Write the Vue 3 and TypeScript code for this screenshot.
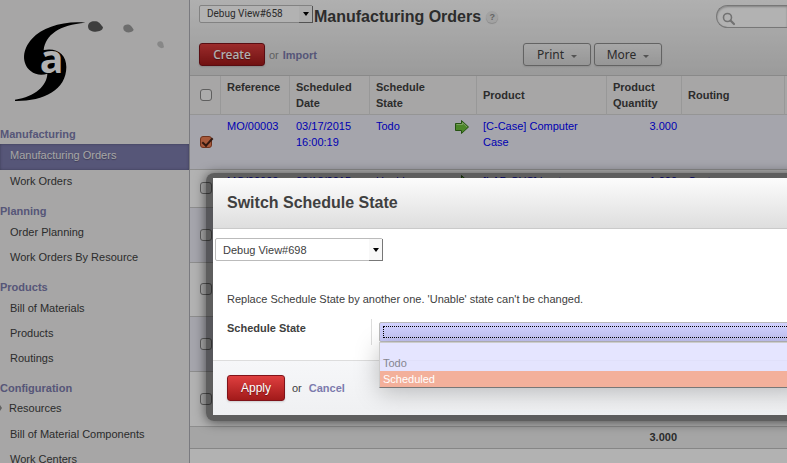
<script setup lang="ts">
import { ref } from 'vue'

interface MenuGroup {
  title: string
  items: string[]
}

interface OrderRow {
  reference: string
  date: string
  state: string
  product: string
  quantity: string
  routing: string
  height: number
}

const menu: MenuGroup[] = [
  { title: 'Manufacturing', items: ['Manufacturing Orders', 'Work Orders'] },
  { title: 'Planning', items: ['Order Planning', 'Work Orders By Resource'] },
  { title: 'Products', items: ['Bill of Materials', 'Products', 'Routings'] },
  { title: 'Configuration', items: ['Resources', 'Bill of Material Components', 'Work Centers'] },
]
const expandable = 'Resources'
const active = ref('Manufacturing Orders')

const blank = { reference: '', date: '', state: '', product: '', quantity: '', routing: '' }
const rows: OrderRow[] = [
  { reference: 'MO/00003', date: '03/17/2015 16:00:19', state: 'Todo', product: '[C-Case] Computer Case', quantity: '3.000', routing: '', height: 55 },
  { reference: 'MO/00002', date: '03/18/2015', state: 'Unable', product: '[LAP-CUS] Laptop', quantity: '1.000', routing: 'Custom', height: 38 },
  { ...blank, height: 55 },
  { ...blank, height: 54 },
  { ...blank, height: 55 },
  { ...blank, height: 55 },
]
const checked = ref<boolean[]>([true, false, false, false, false, false])

const states = ['', 'Todo', 'Scheduled']
const highlighted = ref('Scheduled')
</script>

<template>
  <div class="page">
    <aside class="sidebar">
      <svg class="logo" viewBox="0 0 540 354" aria-hidden="true">
        <path d="M256 68C190 62 128 82 96 116C66 148 64 190 92 213C106 225 126 227 142 221C141 256 106 290 45 299L45 303C130 304 199 270 199 201C199 164 172 142 131 150C136 105 178 74 256 68Z" fill="#000" />
        <path d="M264 78C265 66 276 62 288 64C299 66 303 75 309 82C308 92 296 96 283 95C270 94 264 88 264 78Z" fill="#5a5a5a" />
        <path d="M370 82C371 74 380 72 388 74C395 77 397 83 401 89C399 96 389 98 380 97C372 94 369 89 370 82Z" fill="#9c9c9c" />
        <path d="M472 130C473 124 480 122 486 125C491 129 490 135 492 141C488 147 481 144 476 140C472 137 471 134 472 130Z" fill="#c2c2c2" />
        <text x="119" y="219" class="logo-letter">a</text>
      </svg>
      <nav>
        <section v-for="group in menu" :key="group.title" class="group">
          <h2>{{ group.title }}</h2>
          <a
            v-for="item in group.items"
            :key="item"
            href="#"
            class="item"
            :class="{ active: item === active, parent: item === expandable }"
            @click.prevent="active = item"
          >{{ item }}</a>
        </section>
      </nav>
    </aside>

    <main class="content">
      <header class="toolbar">
        <div class="top-line">
          <div class="heading">
            <span class="picker small">
              <select aria-label="Debug view"><option>Debug View#658</option></select>
            </span>
            <h1>Manufacturing Orders</h1>
            <span class="help">?</span>
          </div>
          <label class="search">
            <svg viewBox="0 0 14 14" aria-hidden="true">
              <circle cx="5.5" cy="5.5" r="4" fill="none" stroke="#a4a4a4" stroke-width="1.6" />
              <path d="M8.5 8.5L12 12" stroke="#a4a4a4" stroke-width="2.2" stroke-linecap="round" />
            </svg>
            <input type="text" aria-label="Search" />
          </label>
        </div>
        <div class="actions">
          <div class="primary">
            <button type="button" class="red create">Create</button>
            <span class="or">or</span>
            <a href="#" class="link">Import</a>
          </div>
          <div class="menus">
            <button type="button" class="drop">Print</button>
            <button type="button" class="drop">More</button>
          </div>
        </div>
      </header>

      <table class="orders">
        <colgroup>
          <col class="c-check" /><col class="c-ref" /><col class="c-date" /><col class="c-state" />
          <col class="c-arrow" /><col class="c-product" /><col class="c-qty" /><col class="c-routing" /><col />
        </colgroup>
        <thead>
          <tr>
            <th class="check"><input type="checkbox" aria-label="Select all" /></th>
            <th class="top">Reference</th>
            <th>Scheduled Date</th>
            <th colspan="2">Schedule<br />State</th>
            <th>Product</th>
            <th>Product Quantity</th>
            <th>Routing</th>
            <th></th>
          </tr>
        </thead>
        <tbody>
          <tr v-for="(row, i) in rows" :key="i" :style="{ height: row.height + 'px' }">
            <td class="check"><input v-model="checked[i]" type="checkbox" aria-label="Select order" /></td>
            <td>{{ row.reference }}</td>
            <td>{{ row.date }}</td>
            <td>{{ row.state }}</td>
            <td class="arrow">
              <svg v-if="row.reference" viewBox="0 0 16 16" aria-hidden="true">
                <path d="M1.5 4.5H7.5V1.5L14.5 8L7.5 14.5V11.5H1.5Z" fill="#6cc13a" stroke="#35761a" stroke-linejoin="round" />
                <path d="M2.5 5.5H8.5V3.8L13 8" fill="none" stroke="#b4e48c" />
              </svg>
            </td>
            <td>{{ row.product }}</td>
            <td class="num">{{ row.quantity }}</td>
            <td>{{ row.routing }}</td>
            <td></td>
          </tr>
        </tbody>
        <tfoot>
          <tr>
            <td colspan="6"></td>
            <td class="num">3.000</td>
            <td colspan="2"></td>
          </tr>
        </tfoot>
      </table>
    </main>

    <div class="overlay"></div>

    <div class="dialog" role="dialog" aria-labelledby="dialog-title">
      <header class="dialog-head"><h2 id="dialog-title">Switch Schedule State</h2></header>
      <div class="dialog-body">
        <span class="picker large">
          <select aria-label="Debug view"><option>Debug View#698</option></select>
        </span>
        <p>Replace Schedule State by another one. 'Unable' state can't be changed.</p>
        <div class="field">
          <label for="state">Schedule State</label>
          <div class="control">
            <select id="state"><option v-for="s in states" :key="s">{{ s }}</option></select>
            <ul class="options" role="listbox">
              <li
                v-for="s in states"
                :key="s"
                role="option"
                :aria-selected="s === highlighted"
                :class="{ on: s === highlighted, empty: !s }"
                @mouseenter="highlighted = s"
              >{{ s }}</li>
            </ul>
          </div>
        </div>
      </div>
      <footer class="dialog-foot">
        <button type="button" class="red apply">Apply</button>
        <span>or</span>
        <a href="#" class="link">Cancel</a>
      </footer>
    </div>
  </div>
</template>

<style>
body {
  margin: 0;
}
</style>

<style scoped>
* {
  box-sizing: border-box;
}
.page {
  position: relative;
  display: flex;
  height: 100vh;
  overflow: hidden;
  background: #fff;
  color: #404040;
  font: 11px/16px "Liberation Sans", Arial, sans-serif;
}
h1,
h2,
p,
ul {
  margin: 0;
  padding: 0;
}
a {
  text-decoration: none;
}
button,
select,
input {
  margin: 0;
  font: inherit;
  color: inherit;
}

.sidebar {
  flex: 0 0 190px;
  overflow: hidden;
  border-right: 1px solid #afafb6;
  background: #efeeee;
}
.logo {
  display: block;
  width: 180px;
  height: 118px;
}
.logo-letter {
  fill: #fff;
  font: bold 118px "Open Sans", sans-serif;
}
.group h2 {
  height: 26px;
  padding-top: 7px;
  color: #7c7bad;
  font-size: 11px;
  line-height: 18px;
}
.item {
  display: block;
  height: 25px;
  padding-left: 10px;
  color: #404040;
  line-height: 22px;
}
.item.active {
  height: 26px;
  background: #7c7bad;
  color: #eee;
  box-shadow: inset 0 0 3px rgba(0, 0, 0, 0.3);
  text-shadow: 0 1px 1px rgba(0, 0, 0, 0.3);
}
.item.parent {
  display: flex;
  align-items: center;
  gap: 7px;
  padding: 0 0 5px;
}
.item.parent::before {
  content: "";
  border: solid transparent;
  border-width: 3px 0 3px 2px;
  border-left-color: #8c8c8c;
}

.content {
  flex: 1;
  min-width: 0;
}
.toolbar {
  height: 76px;
  padding: 5px 0 0 9px;
  border-bottom: 1px solid #c4c4c4;
  background: linear-gradient(#fcfcfc, #dedede);
}
.top-line {
  display: flex;
  justify-content: space-between;
  height: 38px;
}
.heading {
  display: flex;
  align-items: flex-start;
}
h1 {
  margin-left: 1px;
  font-size: 16px;
  line-height: 23px;
}
.help {
  width: 12px;
  height: 12px;
  margin: 6px 0 0 5px;
  border-radius: 50%;
  background: #e8e8e8;
  box-shadow: 0 1px 1px #c4c4c4;
  color: #909090;
  font-size: 9px;
  font-weight: bold;
  line-height: 12px;
  text-align: center;
}
.search {
  display: flex;
  align-items: center;
  width: 71px;
  height: 23px;
  padding-left: 5px;
  border: 1px solid #ababab;
  border-right: 0;
  border-radius: 12px 0 0 12px;
  background: #fff;
  box-shadow: inset 0 1px 2px #bbb;
}
.search svg {
  flex: none;
  width: 14px;
  height: 14px;
  margin-top: 4px;
}
.search input {
  width: 100%;
  min-width: 0;
  border: 0;
  outline: 0;
  background: none;
}
.picker {
  position: relative;
  display: block;
}
.picker select {
  display: block;
  width: 100%;
  height: 100%;
  padding: 0 7px;
  appearance: none;
  border: 1px solid #bbb;
  border-radius: 2px;
  background: #fff;
}
.picker::before {
  content: "";
  position: absolute;
  top: 1px;
  right: 0;
  bottom: 0;
  width: 13px;
  border: solid #777;
  border-width: 0 1px 1px 0;
  background: #f8f8f8;
}
.picker::after {
  content: "";
  position: absolute;
  top: 50%;
  right: 4px;
  margin-top: -2px;
  border: solid transparent;
  border-width: 4px 3px 0;
  border-top-color: #000;
}
.small {
  width: 114px;
  height: 18px;
  font: 10px/14px Roboto, sans-serif;
}
.large {
  width: 168px;
  height: 23px;
  margin-left: 2px;
}
.actions {
  display: grid;
  grid-template-columns: 324px 1fr;
}
.primary,
.menus {
  display: flex;
  align-items: center;
}
.menus {
  gap: 3px;
}
.red {
  padding: 0;
  border: 1px solid #80141a;
  border-radius: 3px;
  background: linear-gradient(#df3f3f, #a21a1a);
  color: #fff;
  text-shadow: 0 1px 1px rgba(0, 0, 0, 0.4);
  box-shadow: 0 1px 2px rgba(0, 0, 0, 0.15);
}
.create {
  width: 66px;
  height: 23px;
  font: 500 12px/20px "Noto Sans", sans-serif;
}
.or {
  margin: 0 4px;
  color: #8a8a8a;
}
.link {
  color: #7c7bad;
  font-weight: bold;
}
.drop {
  display: flex;
  align-items: center;
  justify-content: center;
  gap: 7px;
  width: 68px;
  height: 23px;
  padding: 0;
  border: 1px solid #8e8e8e;
  border-radius: 3px;
  background: linear-gradient(#efefef, #d8d8d8);
  font: 12px/20px "Noto Sans", sans-serif;
  box-shadow: 0 1px 2px rgba(0, 0, 0, 0.1);
}
.drop::after {
  content: "";
  margin-top: 3px;
  border: solid transparent;
  border-width: 3px 3px 0;
  border-top-color: #777;
}

.orders {
  width: 100%;
  table-layout: fixed;
  border-spacing: 0;
}
.c-check { width: 31px; }
.c-ref { width: 69px; }
.c-date { width: 80px; }
.c-state { width: 79px; }
.c-arrow { width: 28px; }
.c-product { width: 130px; }
.c-qty { width: 75px; }
.c-routing { width: 103px; }
th,
td {
  overflow: hidden;
  padding: 3px 5px 0 6px;
  text-align: left;
  vertical-align: top;
}
th {
  height: 39px;
  border-right: 1px solid #dadada;
  border-bottom: 1px solid #d6d6d6;
  background: #f0eeee;
  padding-top: 0;
  vertical-align: middle;
}
th.top {
  padding-top: 3px;
  vertical-align: top;
}
th:last-child {
  border-right: 0;
}
tbody td {
  border-bottom: 1px solid #cacaca;
  color: #00f;
}
tbody tr:nth-child(odd) td {
  background: #ededf7;
}
td.num {
  text-align: right;
}
tfoot td {
  height: 22px;
  padding-top: 2px;
  border-bottom: 1px solid #c0c0c0;
  background: #ececec;
  font-weight: bold;
}
.check,
tbody td.check {
  padding: 0 0 1px 10px;
  vertical-align: middle;
}
.check input {
  display: block;
  width: 12px;
  height: 12px;
  appearance: none;
  border: 1px solid #888;
  border-radius: 3px;
  background: #f6f6f6;
}
.check input:checked {
  border-color: #a0492a;
  background: #f08055;
}
.check input:checked::after {
  content: "";
  display: block;
  width: 9px;
  height: 4px;
  margin: 1px 0 0 1px;
  border: solid #4a2418;
  border-width: 0 0 2px 2px;
  transform: rotate(-48deg);
}
td.arrow {
  padding: 4px 0 0 5px;
}
.arrow svg {
  display: block;
  width: 16px;
  height: 16px;
}

.overlay {
  position: absolute;
  inset: 0;
  background: rgba(0, 0, 0, 0.3);
}
.dialog {
  position: absolute;
  top: 173px;
  left: 206px;
  right: -20px;
  padding: 5px 0 6px 7px;
  border-radius: 8px;
  background: rgba(0, 0, 0, 0.47);
  box-shadow: 0 1px 12px rgba(0, 0, 0, 0.6);
}
.dialog-head {
  padding: 0 14px;
  border-bottom: 1px solid #cacaca;
  background: linear-gradient(#fcfcfc, #dedede);
}
.dialog-head h2 {
  font-size: 16px;
  line-height: 50px;
}
.dialog-body {
  padding: 9px 0 15px;
  background: #fff;
}
.dialog-body p {
  padding: 30px 14px 12px;
}
.field {
  display: flex;
  height: 26px;
  padding-left: 14px;
}
.field label {
  width: 145px;
  border-right: 1px solid #ddd;
  font-weight: bold;
  line-height: 18px;
}
.control {
  position: relative;
  flex: 1;
  padding: 3px 0 0 7px;
}
.control select {
  display: block;
  width: 100%;
  height: 20px;
  appearance: none;
  border: 1px solid #bbb;
  border-radius: 2px;
  outline: 1px dotted #000;
  outline-offset: -5px;
  background: linear-gradient(#d2d2ff, #c8c8fa);
}
.options {
  position: absolute;
  top: 23px;
  left: 7px;
  right: 0;
  border: 1px solid #ccc;
  border-bottom-color: #777;
  background: rgba(224, 224, 255, 0.85);
  box-shadow: 0 4px 24px rgba(0, 0, 0, 0.25);
  color: #85858f;
  list-style: none;
}
.options li {
  height: 16px;
  padding-left: 3px;
}
.options .empty {
  height: 12px;
}
.options .on {
  background: #f3b09b;
  color: #fff;
}
.dialog-foot {
  display: flex;
  align-items: center;
  gap: 7px;
  height: 55px;
  padding-left: 14px;
  border-top: 1px solid #ddd;
  background: linear-gradient(#f6f7f9, #eff0f2);
}
.apply {
  width: 58px;
  height: 26px;
  font-size: 12px;
}
</style>
